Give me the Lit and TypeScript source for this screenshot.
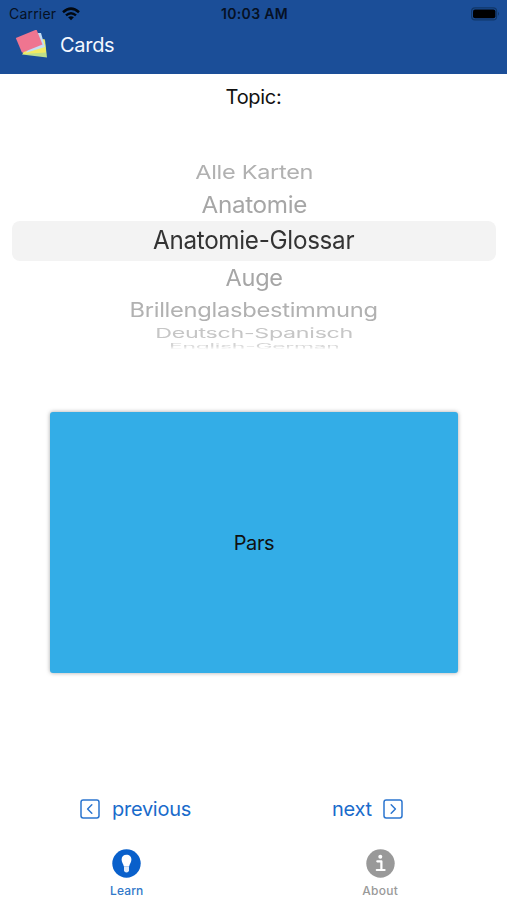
import { LitElement, html, css, svg } from "lit";
import { customElement, state } from "lit/decorators.js";
import { styleMap } from "lit/directives/style-map.js";

interface Row {
  text: string;
  height: number;
  sx: number;
  sy: number;
  color: string;
}

const ROWS: Row[] = [
  { text: "Alle Karten", height: 32, sx: 0.98, sy: 0.8, color: "#b1b1b1" },
  { text: "Anatomie", height: 32, sx: 1.01, sy: 0.97, color: "#a6a6a6" },
  { text: "Anatomie-Glossar", height: 40, sx: 1.01, sy: 1.04, color: "#333" },
  { text: "Auge", height: 34, sx: 0.98, sy: 0.97, color: "#a6a6a6" },
  { text: "Brillenglasbestimmung", height: 29, sx: 0.988, sy: 0.82, color: "#b1b1b1" },
  { text: "Deutsch-Spanisch", height: 19, sx: 0.968, sy: 0.56, color: "#c6c6c6" },
  { text: "English-German", height: 7, sx: 0.955, sy: 0.3, color: "#d4d4d4" },
];

@customElement("topic-wheel")
export class TopicWheel extends LitElement {
  static styles = css`
    :host { display: block; height: 193px; }
    .row { display: flex; align-items: center; justify-content: center; margin: 0 11px 0 12px; border-radius: 8px; }
    .row.selected { background: #f3f3f3; }
    .row.last { overflow: hidden; mask-image: linear-gradient(#000 40%, transparent 95%); }
    .label { font-size: 24px; line-height: 30px; letter-spacing: -0.3px; white-space: nowrap; flex: none; }
  `;
  @state() private selected = 2;
  render() {
    return ROWS.map(
      (r, i) => html`<div
        class="row ${i === this.selected ? "selected" : ""} ${i === ROWS.length - 1 ? "last" : ""}"
        style=${styleMap({ height: `${r.height}px` })}
      >
        <span class="label" style=${styleMap({ color: r.color, transform: `scale(${r.sx}, ${r.sy})` })}>${r.text}</span>
      </div>`
    );
  }
}

@customElement("app-root")
export class AppRoot extends LitElement {
  static styles = css`
    :host { display: flex; flex-direction: column; height: 900px; background: #fff; color: #111;
      font-family: Inter, "Liberation Sans", sans-serif; box-sizing: border-box; overflow: hidden; }
    svg { display: block; flex: none; }
    header { height: 74px; background: #1b4e98; flex: none; }
    .status { height: 27px; display: grid; grid-template-columns: 1fr auto 1fr; align-items: center; padding: 0 7px 0 9px; color: #061124; font-size: 13.5px; }
    .carrier { display: flex; align-items: center; gap: 6px; }
    .name { font-size: 14px; letter-spacing: 0.2px; }
    .time { font-weight: 600; font-size: 14px; letter-spacing: 0.35px; }
    .battery { justify-self: end; }
    .brand { display: flex; align-items: center; height: 35px; padding-left: 15px; gap: 11px; }
    .title { color: #f4f8ff; font-size: 20px; letter-spacing: -0.3px; }
    .topic { height: 46px; line-height: 46px; text-align: center; font-size: 20px; flex: none; letter-spacing: -0.3px; }
    topic-wheel { margin-top: 37px; }
    .card { margin: 62px 49px 0 50px; height: 261px; flex: none; background: #33ade7; border-radius: 3px; display: grid; place-items: center;
      box-shadow: 0 0 4px rgba(0, 0, 0, 0.35); font-size: 20px; }
    .word { letter-spacing: -0.35px; }
    .nav { display: flex; margin-top: 118px; height: 36px; align-items: center; color: #1a6bcb; font-size: 20px; letter-spacing: -0.27px; }
    .prev { display: flex; align-items: center; gap: 12px; margin-left: 80px; width: 252px; }
    .next { display: flex; align-items: center; gap: 11px; }
    .tabs { display: grid; grid-template-columns: 1fr 1fr; margin-top: 22px; }
    .tab { display: flex; flex-direction: column; align-items: center; gap: 5px; font-size: 12px; line-height: 16px; font-weight: 500; color: #3178c9; letter-spacing: 0.1px; }
    .tab.idle { color: #999; letter-spacing: 0.3px; }
  `;

  private chevron(path: string) {
    return svg`<svg width="20" height="20" viewBox="0 0 20 20" fill="none" stroke="#2b75cf" stroke-width="1.5" stroke-linecap="round" stroke-linejoin="round">
      <rect x="1" y="1" width="18" height="18" rx="2.2"/><path d=${path}/></svg>`;
  }

  render() {
    return html`
      <header>
        <div class="status">
          <div class="carrier">
            <span class="name">Carrier</span>
            <svg width="18" height="14" viewBox="0 0 18 14" fill="none" stroke="#020810" stroke-width="2.5">
              <path d="M1 5.2Q9-2 17 5.2"/><path d="M4 8.4Q9 4 14 8.4"/><path d="M9 13.2L6.1 10.3Q9 8.3 11.9 10.3Z" fill="#020810" stroke="none"/>
            </svg>
          </div>
          <span class="time">10:03 AM</span>
          <svg class="battery" width="29" height="14" viewBox="0 0 29 14">
            <rect x="0.6" y="0.8" width="25" height="12" rx="3.4" fill="none" stroke="#113768" stroke-width="1.2"/>
            <rect x="2" y="2.4" width="22.4" height="8.9" rx="2" fill="#000"/>
            <path d="M27 4.8Q29 6.8 27 8.8Z" fill="#113768"/>
          </svg>
        </div>
        <div class="brand">
          <svg width="34" height="30" viewBox="0 0 34 30">
            <path d="M9 22L30 10L32 27.500L7 24.500Z" fill="#bfe08a"/>
            <path d="M10 12L29.500 9L31 22.500L8 24Z" fill="#f3ec62"/>
            <path d="M23 3L26 3L30 17L11 22.800Z" fill="#c3ddf4"/>
            <path d="M0.800 8L21.500 -0.500L27.500 14.500L7 22.800Z" fill="#ef7590"/>
          </svg>
          <span class="title">Cards</span>
        </div>
      </header>
      <div class="topic"><span class="t">Topic:</span></div>
      <topic-wheel></topic-wheel>
      <div class="card"><span class="word">Pars</span></div>
      <div class="nav">
        <div class="prev">${this.chevron("M11.800 5.800L7.600 10L11.800 14.200")}<span>previous</span></div>
        <div class="next"><span>next</span>${this.chevron("M8.200 5.800L12.400 10L8.200 14.200")}</div>
      </div>
      <div class="tabs">
        <div class="tab">
          <svg width="29" height="29" viewBox="0 0 29 29"><circle cx="14.500" cy="14.500" r="14.200" fill="#0960cb"/>
            <path d="M14.500 5.700C11.600 5.700 9.600 7.700 9.600 10.400C9.600 13.200 11.200 14.300 11.900 17.600H17.100C17.800 14.300 19.400 13.200 19.400 10.400C19.400 7.700 17.400 5.700 14.500 5.700Z" fill="#fff"/>
            <path d="M12 17.500H17V21.200Q16.800 23.400 14.500 23.400Q12.200 23.400 12 21.200Z" fill="#e1ecfa"/></svg>
          <span>Learn</span>
        </div>
        <div class="tab idle">
          <svg width="29" height="29" viewBox="0 0 29 29"><circle cx="14.500" cy="14.500" r="14.200" fill="#999"/>
            <circle cx="14.300" cy="7.800" r="2" fill="#fff"/>
            <path d="M11.300 12.300H15.400V20.900M10.800 21H18.600" fill="none" stroke="#fff" stroke-width="2.200" stroke-linecap="round" stroke-linejoin="round"/></svg>
          <span>About</span>
        </div>
      </div>
    `;
  }
}
